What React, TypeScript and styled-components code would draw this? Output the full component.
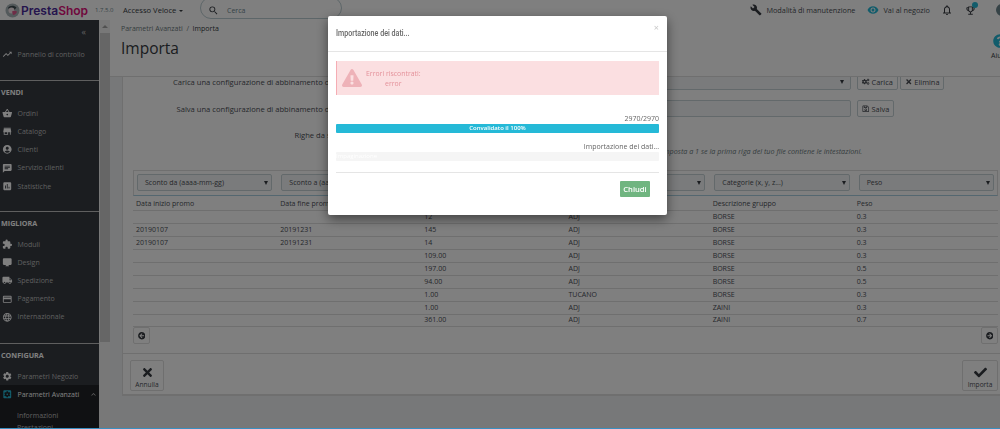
import React from 'react';
import styled, { createGlobalStyle } from 'styled-components';
import {
  MdAccountCircle,
  MdAssessment,
  MdBuild,
  MdChat,
  MdDesktopMac,
  MdExpandLess,
  MdExtension,
  MdLanguage,
  MdLocalShipping,
  MdNotificationsNone,
  MdOutlineEmojiEvents,
  MdPayment,
  MdRemoveRedEye,
  MdSearch,
  MdSettings,
  MdSettingsApplications,
  MdShoppingBasket,
  MdStore,
  MdTrendingUp,
} from 'react-icons/md';
import {
  FaArrowCircleLeft,
  FaArrowCircleRight,
  FaCheck,
  FaCogs,
  FaExclamationTriangle,
  FaQuestionCircle,
  FaRegSave,
  FaTimes,
} from 'react-icons/fa';

const GlobalStyle = createGlobalStyle`
  html, body { margin: 0; padding: 0; background: #eff1f2; }
  * { box-sizing: border-box; }
  body { font-family: "Open Sans", "Liberation Sans", sans-serif; color: #363a41; }
`;

const Page = styled.div`
  position: relative;
  width: 1000px;
  height: 429px;
  overflow: hidden;
  display: flex;
  flex-direction: column;
  filter: blur(0.5px);
`;

const Header = styled.header`
  height: 20px;
  flex: none;
  display: flex;
  align-items: center;
  background: #fff;
  overflow: hidden;
`;

const Logo = styled.div`
  display: flex;
  align-items: center;
  width: 95px;
  flex: none;
  padding-left: 5px;
  gap: 1px;
  font-family: Inter, sans-serif;
  font-size: 12px;
  font-weight: 600;
  color: #4a2a9a;
  b { font-weight: 600; color: #e0107a; }
`;

const Version = styled.span`
  width: 28px;
  flex: none;
  font-size: 6px;
  color: #6c868e;
`;

const QuickAccess = styled.span`
  width: 77px;
  flex: none;
  font-size: 7.6px;
  color: #363a41;
  &::after {
    content: '';
    display: inline-block;
    margin-left: 3px;
    vertical-align: 1px;
    border: 2.5px solid transparent;
    border-top-color: #363a41;
    border-bottom: 0;
  }
`;

const SearchBox = styled.div`
  width: 142px;
  height: 22px;
  margin-top: -5px;
  display: flex;
  align-items: center;
  border: 1px solid #bbcdd2;
  border-radius: 11px;
  padding: 5px 0 0 7px;
  font-size: 7px;
  color: #6c868e;
  svg { font-size: 11px; margin-right: 8px; color: #363a41; }
`;

const HeaderRight = styled.div`
  margin-left: auto;
  margin-right: -8px;
  display: flex;
  align-items: center;
  font-size: 7.3px;
  color: #4a4e55;
`;

const HeaderLink = styled.span<{ $gap: number; $color?: string }>`
  display: flex;
  align-items: center;
  gap: 4px;
  margin-right: ${(p) => p.$gap}px;
  svg { font-size: 12px; color: ${(p) => p.$color || '#363a41'}; }
`;

const Badge = styled.i`
  position: absolute;
  top: -3px;
  right: -2px;
  width: 6px;
  height: 6px;
  border-radius: 50%;
  background: #25b9d7;
`;

const BadgeWrap = styled.span`
  position: relative;
  display: flex;
  margin-right: 20px;
  svg { font-size: 11px; color: #363a41; }
`;

const Avatar = styled.span`
  width: 12px;
  height: 12px;
  border-radius: 50%;
  background: #6c868e;
`;

const Body = styled.div`
  flex: 1;
  min-height: 0;
  display: flex;
`;

const Sidebar = styled.nav`
  width: 99px;
  flex: none;
  background: #363a41;
  color: #bebebe;
  font-size: 7px;
  overflow: hidden;
`;

const Collapse = styled.div`
  height: 25px;
  padding: 5px 13px 0 0;
  text-align: right;
  font-size: 9px;
  line-height: 13px;
  color: #bebebe;
`;

const Divider = styled.div<{ $top: number }>`
  height: 1px;
  margin-top: ${(p) => p.$top}px;
  background: #bebebe;
`;

const SectionTitle = styled.div`
  height: 23px;
  line-height: 23px;
  padding-left: 1px;
  font-size: 7.2px;
  font-weight: 700;
  color: #fff;
`;

const NavItem = styled.div<{ $active?: boolean }>`
  height: 18.2px;
  display: flex;
  align-items: center;
  gap: 5px;
  padding-left: 2px;
  white-space: nowrap;
  background: ${(p) => (p.$active ? '#202226' : 'transparent')};
  color: ${(p) => (p.$active ? '#fff' : '#bebebe')};
  svg { font-size: 10.5px; flex: none; color: ${(p) => (p.$active ? '#25b9d7' : '#fff')}; }
`;

const Chevron = styled.span`
  margin-left: 5px;
  display: flex;
  svg { color: #bebebe; font-size: 9px; }
`;

const SubMenu = styled.div`
  background: #202226;
  padding-top: 7px;
  height: 40px;
`;

const SubItem = styled.div`
  height: 12px;
  line-height: 12px;
  padding-left: 17px;
  color: #bebebe;
  font-size: 7px;
`;

const ScrollTrack = styled.div`
  width: 11px;
  flex: none;
  background: #f1f1f1;
  padding-left: 1px;
  display: flex;
  flex-direction: column;
`;

const ScrollArrow = styled.div`
  height: 13px;
  display: flex;
  justify-content: center;
  padding-top: 5px;
  &::before {
    content: '';
    height: 0;
    border: 3px solid transparent;
    border-bottom-color: #a3a3a3;
    border-top: 0;
  }
`;

const ScrollThumb = styled.div`
  height: 309px;
  background: #cdcdcd;
`;

const Main = styled.main`
  flex: 1;
  min-width: 0;
  display: flex;
  flex-direction: column;
`;

const PageHead = styled.div`
  height: 57px;
  flex: none;
  display: flex;
  justify-content: space-between;
  padding-left: 11px;
  background: #fff;
  border-bottom: 1px solid #dfdfdf;
  overflow: hidden;
`;

const Crumbs = styled.div`
  padding-top: 4px;
  font-size: 7px;
  line-height: 9px;
  color: #6c7a80;
  b { font-weight: 400; color: #363a41; }
`;

const Title = styled.h1`
  margin: 5px 0 0;
  font-size: 15.5px;
  line-height: 20px;
  font-weight: 400;
  color: #363a41;
`;

const Help = styled.div`
  width: 9px;
  flex: none;
  padding-top: 14px;
  font-size: 7px;
  white-space: nowrap;
  color: #363a41;
  svg { display: block; margin: 0 0 3px 2px; font-size: 14px; color: #25b9d7; }
`;

const ContentArea = styled.div`
  flex: 1;
  min-height: 0;
  padding: 0 0 32px 12px;
`;

const Panel = styled.section`
  height: 319px;
  background: #fff;
  border-left: 1px solid #dfdfdf;
  border-bottom: 2px solid #dfdfdf;
  overflow: hidden;
  font-size: 7.4px;
`;

const FormRow = styled.div<{ $top: number }>`
  display: flex;
  align-items: center;
  height: 17px;
  margin-top: ${(p) => p.$top}px;
`;

const FormLabel = styled.label`
  width: 228px;
  flex: none;
  text-align: right;
  font-size: 7.6px;
  color: #4a4e55;
  white-space: nowrap;
`;

const FormControl = styled.div`
  width: 489px;
  flex: none;
  height: 17px;
  margin-left: 11px;
  display: flex;
  align-items: center;
  justify-content: flex-end;
  padding-right: 3px;
  border: 1px solid #c6d3d7;
  border-radius: 2px;
  background: #f5f7f8;
`;

const Caret = styled.i`
  border: 2.5px solid transparent;
  border-top: 4px solid #363a41;
  border-bottom: 0;
  margin-right: 3px;
`;

const SmallButton = styled.button`
  height: 17px;
  margin-left: 2px;
  padding: 0 4px;
  display: flex;
  align-items: center;
  gap: 2px;
  border: 1px solid #c6d3d7;
  border-radius: 2px;
  background: #fff;
  font-family: inherit;
  font-size: 7.4px;
  color: #4a4e55;
  svg { font-size: 7.5px; }
`;

const FormActions = styled.div`
  margin-left: 4px;
  display: flex;
`;

const Hint = styled.p`
  margin: 3px 0 0;
  height: 10px;
  padding-right: 138px;
  text-align: right;
  font-size: 7.2px;
  line-height: 10px;
  font-style: italic;
  color: #6c7a80;
`;

const SelectBar = styled.div`
  margin: 14px 2px 0 10px;
  height: 26px;
  padding: 3px 3px;
  display: flex;
  gap: 9px;
  border: 1px solid #dfdfdf;
  border-bottom-color: #a8cfe0;
`;

const ColumnSelect = styled.div`
  flex: 1;
  height: 17px;
  display: flex;
  align-items: center;
  justify-content: space-between;
  padding-left: 7px;
  border: 1px solid #c6d3d7;
  border-radius: 2px;
  background: #f5f7f8;
  font-size: 7px;
  color: #4a4e55;
`;

const DataTable = styled.table`
  width: 865px;
  margin: 2px 0 0 10px;
  table-layout: fixed;
  border-collapse: collapse;
  font-size: 7px;
  color: #4a4e55;

  th, td {
    height: 12.9px;
    padding: 0 3px;
    text-align: left;
    font-weight: 400;
    border-bottom: 1px solid #dfdfdf;
    line-height: 10px;
  }
`;

const NavRow = styled.div`
  display: flex;
  justify-content: space-between;
  margin: 0 2px 0 10px;
`;

const PageButton = styled.button`
  width: 17px;
  height: 17px;
  padding: 0;
  display: flex;
  align-items: center;
  justify-content: center;
  border: 1px solid #dfdfdf;
  border-radius: 2px;
  background: #fff;
  color: #363a41;
  svg { font-size: 7.5px; }
`;

const PanelFooter = styled.div`
  margin-top: 9px;
  padding: 6px 2px 0 7px;
  display: flex;
  justify-content: space-between;
  border-top: 1px solid #dfdfdf;
`;

const BigButton = styled.button<{ $width: number }>`
  width: ${(p) => p.$width}px;
  height: 31px;
  padding: 5px 0 0;
  display: flex;
  flex-direction: column;
  align-items: center;
  gap: 1px;
  border: 1px solid #dfdfdf;
  border-radius: 2px;
  background: #fff;
  font-family: inherit;
  font-size: 6.6px;
  color: #4a4e55;
  svg { font-size: 13px; color: #363a41; }
`;

const BottomLine = styled.div`
  height: 1px;
  flex: none;
  position: relative;
  z-index: 1;
  background: #3a8fc0;
`;

const Backdrop = styled.div`
  position: absolute;
  inset: 0;
  background: rgba(0, 0, 0, 0.5);
  padding: 16px 0 0 328px;
`;

const Modal = styled.div`
  width: 339px;
  height: 199px;
  background: #fff;
  border-radius: 2px;
  box-shadow: 0 4px 12px rgba(0, 0, 0, 0.5);
  color: #6c6c6c;
`;

const ModalHeader = styled.div`
  height: 36px;
  padding: 12px 8px 0;
  display: flex;
  justify-content: space-between;
  border-bottom: 1px solid #e5e5e5;
`;

const ModalTitle = styled.h4`
  margin: 0;
  font-family: Roboto, sans-serif;
  font-size: 8.4px;
  line-height: 11px;
  font-weight: 500;
  color: #666;
  transform: scaleX(0.85);
  transform-origin: left;
`;

const CloseMark = styled.span`
  margin: -5px 0 0;
  font-size: 9px;
  line-height: 9px;
  color: #c8c8c8;
`;

const ModalBody = styled.div`
  padding: 9px 8px 0;
`;

const Alert = styled.div`
  height: 34px;
  display: flex;
  align-items: center;
  gap: 4px;
  padding-left: 5px;
  border-left: 1px solid #f5adb4;
  background: #fbdfe1;
  color: #e4919a;
  font-size: 6.9px;
  svg { font-size: 20px; color: #eeb2b8; }
`;

const AlertText = styled.div`
  text-align: center;
  line-height: 9.5px;
  padding-top: 1px;
`;

const ProgressCaption = styled.div<{ $top: number }>`
  margin-top: ${(p) => p.$top}px;
  height: 10px;
  text-align: right;
  font-size: 7px;
  line-height: 10px;
  color: #666;
`;

const ProgressBar = styled.div<{ $done?: boolean }>`
  height: 9px;
  border-radius: 1px;
  background: ${(p) => (p.$done ? '#25b9d7' : '#f5f5f5')};
  color: #fff;
  font-size: 6px;
  line-height: 9px;
  font-weight: ${(p) => (p.$done ? 600 : 400)};
  text-align: ${(p) => (p.$done ? 'center' : 'left')};
`;

const ModalFooter = styled.div`
  margin: 11px 8px 0;
  padding: 8px 9px 0 0;
  display: flex;
  justify-content: flex-end;
  border-top: 1px solid #e5e5e5;
`;

const CloseButton = styled.button`
  width: 30px;
  height: 16px;
  padding: 0;
  border: 0;
  border-radius: 1px;
  background: #70b580;
  color: #fff;
  font-family: inherit;
  font-size: 7.6px;
  font-weight: 600;
`;

const sections = [
  {
    title: 'VENDI',
    top: 17,
    items: [
      { icon: <MdShoppingBasket />, label: 'Ordini' },
      { icon: <MdStore />, label: 'Catalogo' },
      { icon: <MdAccountCircle />, label: 'Clienti' },
      { icon: <MdChat />, label: 'Servizio clienti' },
      { icon: <MdAssessment />, label: 'Statistiche' },
    ],
  },
  {
    title: 'MIGLIORA',
    top: 16,
    items: [
      { icon: <MdExtension />, label: 'Moduli' },
      { icon: <MdDesktopMac />, label: 'Design' },
      { icon: <MdLocalShipping />, label: 'Spedizione' },
      { icon: <MdPayment />, label: 'Pagamento' },
      { icon: <MdLanguage />, label: 'Internazionale' },
    ],
  },
];

const columns = [
  'Sconto da (aaaa-mm-gg)',
  'Sconto a (aaaa-mm-gg)',
  'Prezzo',
  'Marca',
  'Categorie (x, y, z...)',
  'Peso',
];

const heads = ['Data inizio promo', 'Data fine promo', 'Quantità', 'Marchio', 'Descrizione gruppo', 'Peso'];

const rows = [
  ['', '', '12', 'ADJ', 'BORSE', '0.3'],
  ['20190107', '20191231', '145', 'ADJ', 'BORSE', '0.3'],
  ['20190107', '20191231', '14', 'ADJ', 'BORSE', '0.3'],
  ['', '', '109.00', 'ADJ', 'BORSE', '0.3'],
  ['', '', '197.00', 'ADJ', 'BORSE', '0.5'],
  ['', '', '94.00', 'ADJ', 'BORSE', '0.5'],
  ['', '', '1.00', 'TUCANO', 'BORSE', '0.3'],
  ['', '', '1.00', 'ADJ', 'ZAINI', '0.3'],
  ['', '', '361.00', 'ADJ', 'ZAINI', '0.7'],
];

const LogoMark = () => (
  <svg width="15" height="15" viewBox="0 0 15 15">
    <circle cx="7.5" cy="7.5" r="7" fill="#a9b4b8" />
    <path d="M3 5c1.500-2.500 6-3 8.500-.5L9 7.500 5 7z" fill="#3d4a50" />
    <circle cx="6.500" cy="7.500" r="3" fill="#f4e6ea" />
    <path d="M7 8.500c1.500-1 3.500-1 5 0-.5 2-2 3.500-4 3.500z" fill="#df5a8f" />
  </svg>
);

export default function App() {
  return (
    <>
      <GlobalStyle />
      <Page>
        <Header>
          <Logo>
            <LogoMark />
            <span>
              Presta<b>Shop</b>
            </span>
          </Logo>
          <Version>1.7.5.0</Version>
          <QuickAccess>Accesso Veloce</QuickAccess>
          <SearchBox>
            <MdSearch />
            Cerca
          </SearchBox>
          <HeaderRight>
            <HeaderLink $gap={12}>
              <MdBuild />
              Modalità di manutenzione
            </HeaderLink>
            <HeaderLink $gap={11} $color="#25b9d7">
              <MdRemoveRedEye />
              Vai al negozio
            </HeaderLink>
            <HeaderLink $gap={12}>
              <MdNotificationsNone />
            </HeaderLink>
            <BadgeWrap>
              <MdOutlineEmojiEvents />
              <Badge />
            </BadgeWrap>
            <Avatar />
          </HeaderRight>
        </Header>
        <Body>
          <Sidebar>
            <Collapse>«</Collapse>
            <NavItem>
              <MdTrendingUp />
              Pannello di controllo
            </NavItem>
            {sections.map((s) => (
              <React.Fragment key={s.title}>
                <Divider $top={s.top} />
                <SectionTitle>{s.title}</SectionTitle>
                {s.items.map((item) => (
                  <NavItem key={item.label}>
                    {item.icon}
                    {item.label}
                  </NavItem>
                ))}
              </React.Fragment>
            ))}
            <Divider $top={17} />
            <SectionTitle>CONFIGURA</SectionTitle>
            <NavItem>
              <MdSettings />
              Parametri Negozio
            </NavItem>
            <NavItem $active>
              <MdSettingsApplications />
              Parametri Avanzati
              <Chevron>
                <MdExpandLess />
              </Chevron>
            </NavItem>
            <SubMenu>
              <SubItem>Informazioni</SubItem>
              <SubItem>Prestazioni</SubItem>
            </SubMenu>
          </Sidebar>
          <ScrollTrack>
            <ScrollArrow />
            <ScrollThumb />
          </ScrollTrack>
          <Main>
            <PageHead>
              <div>
                <Crumbs>
                  Parametri Avanzati &nbsp;/&nbsp; <b>Importa</b>
                </Crumbs>
                <Title>Importa</Title>
              </div>
              <Help>
                <FaQuestionCircle />
                Aiuto
              </Help>
            </PageHead>
            <ContentArea>
              <Panel>
                <FormRow $top={-4}>
                  <FormLabel>Carica una configurazione di abbinamento dei dati</FormLabel>
                  <FormControl>
                    <Caret />
                  </FormControl>
                  <FormActions>
                    <SmallButton>
                      <FaCogs />
                      Carica
                    </SmallButton>
                    <SmallButton>
                      <FaTimes />
                      Elimina
                    </SmallButton>
                  </FormActions>
                </FormRow>
                <FormRow $top={10}>
                  <FormLabel>Salva una configurazione di abbinamento dei dati</FormLabel>
                  <FormControl />
                  <FormActions>
                    <SmallButton>
                      <FaRegSave />
                      Salva
                    </SmallButton>
                  </FormActions>
                </FormRow>
                <FormRow $top={9}>
                  <FormLabel>Righe da saltare</FormLabel>
                </FormRow>
                <Hint>imposta a 1 se la prima riga del tuo file contiene le intestazioni.</Hint>
                <SelectBar>
                  {columns.map((c) => (
                    <ColumnSelect key={c}>
                      {c}
                      <Caret />
                    </ColumnSelect>
                  ))}
                </SelectBar>
                <DataTable>
                  <thead>
                    <tr>
                      {heads.map((h) => (
                        <th key={h}>{h}</th>
                      ))}
                    </tr>
                  </thead>
                  <tbody>
                    {rows.map((row, i) => (
                      <tr key={i}>
                        {row.map((cell, j) => (
                          <td key={j}>{cell}</td>
                        ))}
                      </tr>
                    ))}
                  </tbody>
                </DataTable>
                <NavRow>
                  <PageButton>
                    <FaArrowCircleLeft />
                  </PageButton>
                  <PageButton>
                    <FaArrowCircleRight />
                  </PageButton>
                </NavRow>
                <PanelFooter>
                  <BigButton $width={34}>
                    <FaTimes />
                    Annulla
                  </BigButton>
                  <BigButton $width={36}>
                    <FaCheck />
                    Importa
                  </BigButton>
                </PanelFooter>
              </Panel>
            </ContentArea>
          </Main>
        </Body>
        <BottomLine />
        <Backdrop>
          <Modal>
            <ModalHeader>
              <ModalTitle>Importazione dei dati...</ModalTitle>
              <CloseMark>×</CloseMark>
            </ModalHeader>
            <ModalBody>
              <Alert>
                <FaExclamationTriangle />
                <AlertText>
                  Errori riscontrati:
                  <br />
                  error
                </AlertText>
              </Alert>
              <ProgressCaption $top={19}>2970/2970</ProgressCaption>
              <ProgressBar $done>Convalidato il 100%</ProgressBar>
              <ProgressCaption $top={9}>Importazione dei dati...</ProgressCaption>
              <ProgressBar>Impaginazione</ProgressBar>
            </ModalBody>
            <ModalFooter>
              <CloseButton>Chiudi</CloseButton>
            </ModalFooter>
          </Modal>
        </Backdrop>
      </Page>
    </>
  );
}
